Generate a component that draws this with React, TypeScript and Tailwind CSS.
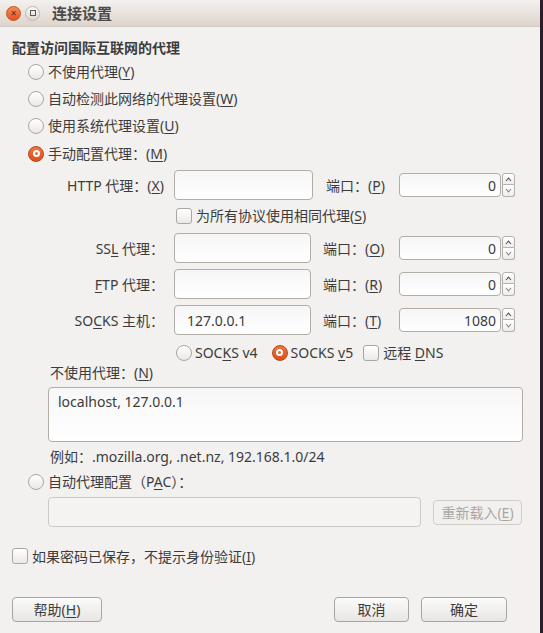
import React from "react";

const font = { fontFamily: '"Noto Sans", "Noto Sans CJK SC", sans-serif' };

function U({ children }: { children: React.ReactNode }) {
  return <span className="underline underline-offset-[2px] decoration-1">{children}</span>;
}

function Radio({ checked = false }: { checked?: boolean }) {
  if (checked) {
    return (
      <span className="w-[16px] h-[16px] rounded-full bg-gradient-to-b from-[#f0733f] to-[#d9501c] border border-[#b9471c] flex items-center justify-center shrink-0">
        <span className="w-[7px] h-[7px] rounded-full bg-white flex items-center justify-center">
          <span className="w-[3px] h-[3px] rounded-full bg-[#e86a35]" />
        </span>
      </span>
    );
  }
  return (
    <span className="w-[16px] h-[16px] rounded-full bg-gradient-to-b from-[#ffffff] to-[#e9e8e6] border border-[#aaa6a2] shrink-0" />
  );
}

function Check() {
  return (
    <span className="w-[16px] h-[16px] rounded-[3px] bg-gradient-to-b from-[#ffffff] to-[#eceae8] border border-[#aaa6a2] shrink-0" />
  );
}

function Spin() {
  return (
    <div className="flex flex-col ml-[1px] gap-0">
      <div className="w-[13px] h-[12px] border border-[#b5b0ab] rounded-t-[3px] bg-gradient-to-b from-white to-[#eeedeb] flex items-center justify-center">
        <svg width="7" height="5" viewBox="0 0 7 5">
          <path d="M1 4 L3.5 1.2 L6 4" fill="none" stroke="#555" strokeWidth="1.1" />
        </svg>
      </div>
      <div className="w-[13px] h-[12px] border border-t-0 border-[#b5b0ab] rounded-b-[3px] bg-gradient-to-b from-white to-[#eeedeb] flex items-center justify-center">
        <svg width="7" height="5" viewBox="0 0 7 5">
          <path d="M1 1 L3.5 3.8 L6 1" fill="none" stroke="#8a8a8a" strokeWidth="1.1" />
        </svg>
      </div>
    </div>
  );
}

function TextInput({ w, value }: { w: number; value?: string }) {
  return (
    <div
      className="h-[30px] border border-[#b3ada7] rounded-[4px] bg-gradient-to-b from-[#f6f6f6] to-white flex items-center px-[12px] shrink-0"
      style={{ width: w }}
    >
      {value}
    </div>
  );
}

function ProxyRow({
  label,
  inputW,
  value,
  portLabel,
  port,
  portBoxW,
  portPl,
}: {
  label: React.ReactNode;
  inputW: number;
  value?: string;
  portLabel: React.ReactNode;
  port: string;
  portBoxW: number;
  portPl: number;
}) {
  return (
    <div className="flex items-center h-[30px]">
      <div className="w-[116px] ml-[36px] text-right pr-0 shrink-0">{label}</div>
      <div className="ml-[10px]">
        <TextInput w={inputW} value={value} />
      </div>
      <div className="shrink-0" style={{ width: portBoxW, paddingLeft: portPl }}>
        {portLabel}
      </div>
      <div className="flex items-center">
        <div className="w-[102px] h-[24px] border border-[#b3ada7] rounded-[4px] bg-gradient-to-b from-[#f6f6f6] to-white flex items-center justify-end pr-[4px]">
          {port}
        </div>
        <Spin />
      </div>
    </div>
  );
}

function Button({ children, w, disabled = false }: { children: React.ReactNode; w: number; disabled?: boolean }) {
  return (
    <div
      className={
        "h-[25px] border rounded-[4px] flex items-center justify-center shrink-0 " +
        (disabled
          ? "border-[#d0ccc8] bg-[#f1f0ef] text-[#a9a7a5]"
          : "border-[#aaa49e] bg-gradient-to-b from-[#fbfbfb] to-[#e8e6e4] text-[#3c3c3c]")
      }
      style={{ width: w }}
    >
      {children}
    </div>
  );
}

export default function App() {
  return (
    <div className="w-[543px] h-[633px] flex bg-[#2b1d2a] text-[14px] text-[#3c3c3c]" style={font}>
      <div className="w-[540px] h-full bg-[#f2f1f0] flex flex-col">
        {/* title bar */}
        <div className="h-[27px] bg-gradient-to-b from-[#f3f1ef] to-[#ddd5cc] border-b border-[#d2cbc4] flex items-center shrink-0">
          <div className="ml-[6px] w-[15px] h-[15px] rounded-full bg-gradient-to-b from-[#f58a5a] to-[#e0531d] border border-[#c9521f] flex items-center justify-center text-[#5a2a18] text-[10px] leading-none">
            ×
          </div>
          <div className="ml-[4px] w-[15px] h-[15px] rounded-full bg-gradient-to-b from-[#faf9f8] to-[#dcd7d2] border border-[#bdb7b1] flex items-center justify-center">
            <span className="w-[6px] h-[6px] border border-[#5a5a5a]" />
          </div>
          <div className="ml-[12px] text-[15px] font-bold text-[#4a4a4a]">连接设置</div>
        </div>

        <div className="flex flex-col pl-[12px]">
          <div className="pt-[10px] h-[31px] leading-[21px] font-bold text-[#3c3c3c]">配置访问国际互联网的代理</div>

          <div className="flex flex-col pl-[16px]">
            <div className="h-[27px] flex items-center gap-[4px]">
              <Radio />
              <span>不使用代理(<U>Y</U>)</span>
            </div>
            <div className="h-[27px] flex items-center gap-[4px]">
              <Radio />
              <span>自动检测此网络的代理设置(<U>W</U>)</span>
            </div>
            <div className="h-[27px] flex items-center gap-[4px]">
              <Radio />
              <span>使用系统代理设置(<U>U</U>)</span>
            </div>
            <div className="h-[28px] flex items-center gap-[4px] pt-[1px]">
              <Radio checked />
              <span>手动配置代理：(<U>M</U>)</span>
            </div>
          </div>

          <div className="mt-[3px]">
            <ProxyRow
              label={<>HTTP 代理：(<U>X</U>)</>}
              inputW={139}
              portLabel={<>端口：(<U>P</U>)</>}
              port="0"
              portBoxW={86}
              portPl={13}
            />
          </div>
          <div className="h-[31px] flex items-center gap-[4px] ml-[164px]">
            <Check />
            <span>为所有协议使用相同代理(<U>S</U>)</span>
          </div>
          <div className="mt-[2px]">
            <ProxyRow
              label={<>SS<U>L</U> 代理：</>}
              inputW={137}
              portLabel={<>端口：(<U>O</U>)</>}
              port="0"
              portBoxW={88}
              portPl={12}
            />
          </div>
          <div className="mt-[6px]">
            <ProxyRow
              label={<><U>F</U>TP 代理：</>}
              inputW={137}
              portLabel={<>端口：(<U>R</U>)</>}
              port="0"
              portBoxW={88}
              portPl={12}
            />
          </div>
          <div className="mt-[6px]">
            <ProxyRow
              label={<>SO<U>C</U>KS 主机：</>}
              inputW={137}
              value="127.0.0.1"
              portLabel={<>端口：(<U>T</U>)</>}
              port="1080"
              portBoxW={88}
              portPl={12}
            />
          </div>

          <div className="h-[33px] flex items-center ml-[164px] pt-[2px]">
            <div className="flex items-center gap-[3px]">
              <Radio />
              <span>SOC<U>K</U>S v4</span>
            </div>
            <div className="flex items-center gap-[3px] ml-[14px]">
              <Radio checked />
              <span>SOCKS <U>v</U>5</span>
            </div>
            <div className="flex items-center gap-[4px] ml-[10px]">
              <Check />
              <span>远程 <U>D</U>NS</span>
            </div>
          </div>

          <div className="ml-[38px] h-[19px] leading-[19px] mt-[-5px]">不使用代理：(<U>N</U>)</div>
          <div className="ml-[36px] mt-[5px] w-[475px] h-[55px] border border-[#b3ada7] rounded-[4px] bg-gradient-to-b from-[#f7f7f7] to-white px-[9px] pt-[4px] leading-[20px]">
            localhost, 127.0.0.1
          </div>
          <div className="ml-[38px] h-[30px] leading-[30px]">例如：.mozilla.org, .net.nz, 192.168.1.0/24</div>

          <div className="h-[19px] flex items-center gap-[4px] ml-[16px] mt-[-1px] pt-[2px]">
            <Radio />
            <span>自动代理配置（P<U>A</U>C）：</span>
          </div>

          <div className="flex items-center ml-[36px] mt-[7px]">
            <div className="w-[373px] h-[30px] border border-[#cdc9c5] rounded-[4px] bg-[#f4f3f2]" />
            <div className="ml-[12px]">
              <Button w={89} disabled>
                <span>重新载入(<U>E</U>)</span>
              </Button>
            </div>
          </div>

          <div className="flex items-center gap-[4px] mt-[19px] h-[20px]">
            <Check />
            <span>如果密码已保存，不提示身份验证(<U>I</U>)</span>
          </div>

          <div className="flex items-center mt-[31px]">
            <Button w={90}>
              <span>帮助(<U>H</U>)</span>
            </Button>
            <div className="ml-[232px]">
              <Button w={75}>取消</Button>
            </div>
            <div className="ml-[12px]">
              <Button w={86}>确定</Button>
            </div>
          </div>
        </div>
      </div>
    </div>
  );
}
